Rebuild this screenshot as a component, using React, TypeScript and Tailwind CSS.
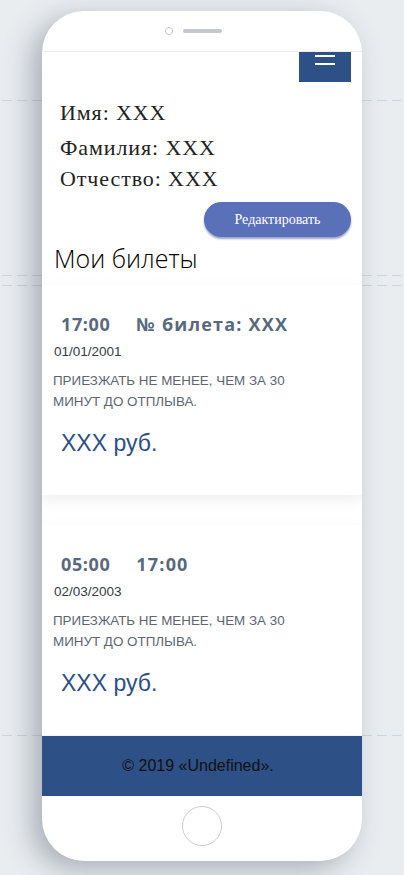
const tickets = [
  { first: "17:00", second: "№ билета: XXX", date: "01/01/2001", price: "XXX руб." },
  { first: "05:00", second: "17:00", date: "02/03/2003", price: "XXX руб." },
];

const dashed =
  "absolute left-0 right-0 h-px bg-[linear-gradient(to_right,transparent_2px,#cfd6dd_2px,#cfd6dd_12px,transparent_12px)] bg-[length:15px_1px]";

function TicketCard({ ticket }: { ticket: (typeof tickets)[number] }) {
  return (
    <div className="h-[210px] bg-white shadow-[0_5px_14px_rgba(0,0,0,0.07)] pt-[27px] pl-[11px]">
      <div className="flex gap-[26px] pl-[8px] font-['Open_Sans',sans-serif] text-[18px] font-bold leading-[24px] text-[#59697d]">
        <span className="tracking-[0.6px]">{ticket.first}</span>
        <span className="tracking-[1.2px]">{ticket.second}</span>
      </div>
      <p className="mt-[6px] pl-px font-['Liberation_Sans',Arial,sans-serif] text-[13.5px] leading-[20px] text-[#333b48]">
        {ticket.date}
      </p>
      <p className="mt-[8px] w-[250px] font-['Liberation_Sans',Arial,sans-serif] text-[13.4px] leading-[21px] text-[#5d6574]">
        ПРИЕЗЖАТЬ НЕ МЕНЕЕ, ЧЕМ ЗА 30 МИНУТ ДО ОТПЛЫВА.
      </p>
      <p className="mt-[16px] pl-[8px] font-['Liberation_Sans',Arial,sans-serif] text-[23px] leading-[30px] text-[#2d4f86]">
        {ticket.price}
      </p>
    </div>
  );
}

export default function App() {
  return (
    <div className="relative h-[875px] w-full overflow-hidden bg-[#e9edf0]">
      {/* background guide lines */}
      <div className={`${dashed} top-[100px]`} />
      <div className={`${dashed} top-[275px]`} />
      <div className={`${dashed} top-[285px]`} />
      <div className={`${dashed} top-[735px]`} />

      <div className="relative mx-auto mt-[11px] flex h-[850px] w-[320px] flex-col overflow-hidden rounded-[42px] bg-white shadow-[-10px_8px_28px_rgba(50,60,75,0.35)]">
        {/* top bezel */}
        <div className="flex h-[41px] shrink-0 items-center gap-[10px] border-b border-[#eeeeee] pl-[123px]">
          <div className="h-[8px] w-[8px] rounded-full border border-[#c5c9cd]" />
          <div className="h-[4px] w-[39px] rounded-full bg-[#c4c8cc]" />
        </div>

        {/* screen */}
        <div className="flex h-[744px] shrink-0 flex-col">
          <div className="flex h-[30px] justify-end pr-[11px]">
            <button className="flex w-[52px] flex-col items-center gap-[6px] bg-[#2d5086] pt-[3px]">
              <span className="block h-[2px] w-[20px] bg-white" />
              <span className="block h-[2px] w-[20px] bg-white" />
            </button>
          </div>

          <div className="pl-[18px] font-['Liberation_Serif','Times_New_Roman',serif] text-[22px] tracking-[0.9px] text-[#222]">
            <p className="mt-[16px] mb-[4px] leading-[30px]">Имя: XXX</p>
            <p className="leading-[31px]">Фамилия: XXX</p>
            <p className="leading-[31px]">Отчество: XXX</p>
          </div>

          <div className="mt-[8px] flex justify-end pr-[11px]">
            <button className="h-[35px] w-[147px] rounded-full bg-[#5a70b8] font-['Liberation_Serif','Times_New_Roman',serif] text-[14px] text-white shadow-[0_2px_2px_rgba(70,90,160,0.55)]">
              Редактировать
            </button>
          </div>

          <h2 className="pl-[12px] font-['Open_Sans',sans-serif] text-[25px] font-light leading-[42px] text-black">
            Мои билеты
          </h2>

          <div className="mt-[6px] flex flex-col gap-[30px]">
            {tickets.map((t, i) => (
              <TicketCard key={i} ticket={t} />
            ))}
          </div>

          <footer className="mt-px flex h-[60px] items-center justify-center bg-[#2d5086] pr-[8px] font-['Liberation_Sans',Arial,sans-serif] text-[16px] text-[#111]">
            © 2019 «Undefined».
          </footer>
        </div>

        {/* bottom bezel */}
        <div className="flex flex-1 justify-center pt-[10px]">
          <div className="h-[40px] w-[40px] rounded-full border border-[#cccccc]" />
        </div>
      </div>
    </div>
  );
}
